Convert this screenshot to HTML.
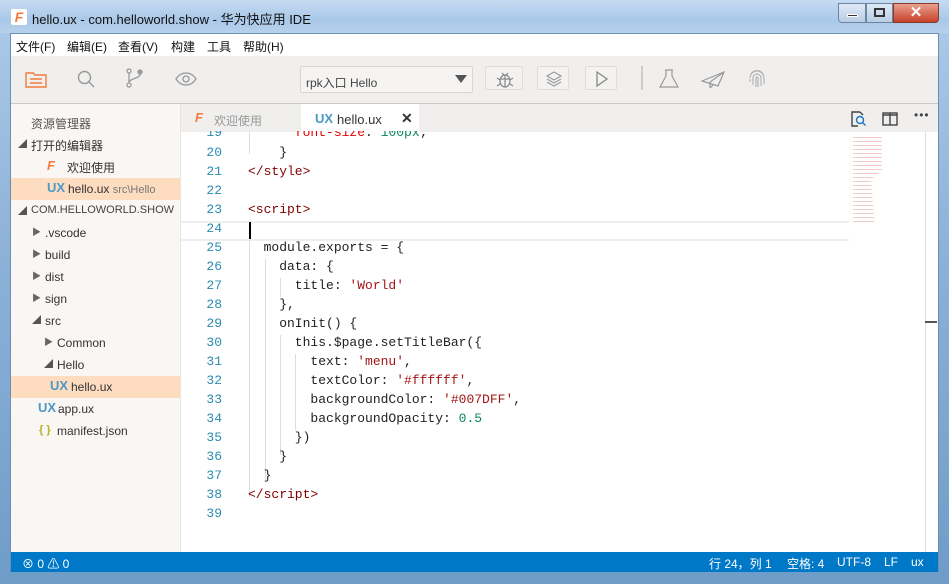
<!DOCTYPE html>
<html><head><meta charset="utf-8"><style>
*{margin:0;padding:0;box-sizing:border-box}
body{width:949px;height:584px;overflow:hidden;font-family:"Liberation Sans","Noto Sans CJK SC",sans-serif;background:linear-gradient(180deg,#aecbe8,#8fb3d9 40%,#6f9cc8);position:relative}
.abs{position:absolute}
.title{left:0;top:0;width:949px;height:33px;background:linear-gradient(180deg,#c6dcf2,#a9c8e8 60%,#b7d1ec);}
.win{left:10px;top:33px;width:929px;height:539px;background:#f0efee;border:1px solid #6b8fb5}
.menu{left:0;top:0;width:927px;height:22px;background:#fff;font-size:12px;color:#111}
.menu span{position:absolute;top:4px}
.tb{left:0;top:22px;width:927px;height:48px;background:#f0efee;border-bottom:1px solid #c9c9c9}
.side{left:0;top:70px;width:170px;height:448px;background:#faf6f3;border-right:1px solid #e8e4e0;font-size:12px;color:#333}
.side div{position:absolute;white-space:nowrap}
.sel{background:#fddcc0;width:169px;height:22px;left:0}
.ux{color:#4b9ac6;font-weight:bold;font-size:13px}
.tabs{left:170px;top:70px;width:757px;height:28px;background:#f0efee}
.ed{left:170px;top:98px;width:757px;height:420px;background:#fff;overflow:hidden}
.ln{position:absolute;left:0;width:42px;text-align:right;font-family:"Liberation Mono",monospace;font-size:13px;color:#2b8cb0}
.cd{position:absolute;left:68px;font-family:"Liberation Mono",monospace;font-size:13px;color:#222;white-space:pre}
.t{color:#800000}.s{color:#a31515}.n{color:#098658}.r{color:#e50000}
.status{left:0;top:518px;width:927px;height:20px;background:#0078c8;color:#fff;font-size:12px}
.status span{position:absolute;top:3px}
.btn{position:absolute;top:10px;height:24px;border:1px solid #ddd;border-radius:2px;background:#f3f2f1}
</style></head><body>
<div class="abs title">
 <div class="abs" style="left:11px;top:9px;width:16px;height:16px;background:#fff;border-radius:2px;color:#f47b3b;font-weight:bold;font-size:14px;line-height:16px;text-align:center;font-style:italic">F</div>
 <div class="abs" style="left:32px;top:9px;font-size:13px;color:#111">hello.ux - com.helloworld.show - 华为快应用 IDE</div>
 <div class="abs" style="left:838px;top:3px;width:28px;height:20px;border:1px solid #6b85a3;border-radius:0 0 0 4px;background:linear-gradient(#dfeaf6,#b9cde4)"><div class="abs" style="left:8px;top:10px;width:11px;height:3px;background:#333;border:1px solid #fff"></div></div>
 <div class="abs" style="left:866px;top:3px;width:27px;height:20px;border:1px solid #6b85a3;background:linear-gradient(#dfeaf6,#b9cde4)"><div class="abs" style="left:7px;top:4px;width:11px;height:9px;border:2px solid #333"></div></div>
 <div class="abs" style="left:893px;top:3px;width:46px;height:20px;border:1px solid #8a3a2a;border-radius:0 0 4px 0;background:linear-gradient(#e8a08e,#c8412a);color:#fff;font-weight:bold;font-size:15px;text-align:center;line-height:18px">✕</div>
</div>
<div class="abs win">
 <div class="abs menu"><span style="left:5px">文件(F)</span><span style="left:56px">编辑(E)</span><span style="left:107px">查看(V)</span><span style="left:160px">构建</span><span style="left:196px">工具</span><span style="left:232px">帮助(H)</span></div>
 <div class="abs tb">
  <svg class="abs" style="left:14px;top:14px" width="22" height="18" viewBox="0 0 22 18" fill="none" stroke="#f47b3b" stroke-width="1.4"><path d="M1 3h7l2 2h11v12H1z"/><path d="M5 9h12M5 13h12"/></svg>
  <svg class="abs" style="left:66px;top:14px" width="18" height="18" fill="none" stroke="#999" stroke-width="1.4"><circle cx="7.5" cy="7.5" r="6"/><path d="M12 12l5 5"/></svg>
  <svg class="abs" style="left:115px;top:12px" width="18" height="20" fill="none" stroke="#999" stroke-width="1.3"><circle cx="3" cy="17" r="2"/><circle cx="3" cy="3" r="2"/><circle cx="14" cy="4" r="2" fill="#999"/><path d="M3 5v10M14 6c0 5-11 4-11 9"/></svg>
  <svg class="abs" style="left:164px;top:16px" width="22" height="14" fill="none" stroke="#999" stroke-width="1.3"><path d="M1 7c5-8 15-8 20 0c-5 8-15 8-20 0z"/><circle cx="11" cy="7" r="3"/></svg>
  <div class="abs" style="left:289px;top:10px;width:173px;height:27px;border:1px solid #d6d6d6;border-radius:2px;background:#f5f4f3;font-size:12px;color:#444;padding:7px 5px">rpk入口 Hello<span class="abs" style="right:5px;top:8px;width:0;height:0;border-left:6px solid transparent;border-right:6px solid transparent;border-top:8px solid #555"></span></div>
  <div class="btn" style="left:474px;width:38px"><svg class="abs" style="left:10px;top:3px" width="18" height="18" fill="none" stroke="#888" stroke-width="1.2"><ellipse cx="9" cy="11" rx="5" ry="6"/><path d="M4 9h10M9 5v12M6 3l2 2M12 3l-2 2M1 8l3 2M17 8l-3 2M1 16l3-2M17 16l-3-2"/></svg></div>
  <div class="btn" style="left:526px;width:32px"><svg class="abs" style="left:7px;top:4px" width="18" height="16" fill="none" stroke="#999" stroke-width="1.1"><path d="M9 1l7 4-7 4-7-4z M2 8l7 4 7-4 M2 11l7 4 7-4"/></svg></div>
  <div class="btn" style="left:574px;width:32px"><svg class="abs" style="left:9px;top:4px" width="14" height="16" fill="none" stroke="#888" stroke-width="1.3"><path d="M2 1l10 7-10 7z"/></svg></div>
  <div class="abs" style="left:630px;top:10px;width:2px;height:24px;background:#ccc"></div>
  <svg class="abs" style="left:648px;top:13px" width="20" height="20" fill="none" stroke="#999" stroke-width="1.2"><path d="M6 1h8M7 1v6L1 18h18L13 7V1"/></svg>
  <svg class="abs" style="left:690px;top:14px" width="24" height="18" fill="none" stroke="#999" stroke-width="1.2"><path d="M1 11L23 2 17 16zM23 2L9 12l0 6 3-3"/></svg>
  <svg class="abs" style="left:737px;top:12px" width="18" height="20" fill="none" stroke="#aaa" stroke-width="1"><path d="M3 6a7 7 0 0 1 12 0M2 10a7 7 0 0 1 14 0v6M5 17v-7a4 4 0 0 1 8 0v8M8 19v-9a1 1 0 0 1 2 0v9M2 14v-3"/></svg>
 </div>
 <div class="abs side">
  <div style="left:20px;top:11px;color:#555">资源管理器</div>
  <div style="left:7px;top:33px;font-size:9px;color:#555">◢</div><div style="left:20px;top:33px">打开的编辑器</div>
  <div style="left:36px;top:54px;color:#f47b3b;font-weight:bold;font-style:italic;font-size:13px">F</div><div style="left:56px;top:55px">欢迎使用</div>
  <div class="sel" style="top:74px"></div>
  <div class="ux" style="left:36px;top:76px">UX</div><div style="left:57px;top:78px">hello.ux <span style="color:#777;font-size:11px">src\Hello</span></div>
  <div style="left:7px;top:100px;font-size:9px;color:#555">◢</div><div style="left:20px;top:100px;font-size:11px;color:#444">COM.HELLOWORLD.SHOW</div>
  <div style="left:21px;top:121px;font-size:9px;color:#666">▶</div><div style="left:34px;top:122px">.vscode</div>
  <div style="left:21px;top:143px;font-size:9px;color:#666">▶</div><div style="left:34px;top:144px">build</div>
  <div style="left:21px;top:165px;font-size:9px;color:#666">▶</div><div style="left:34px;top:166px">dist</div>
  <div style="left:21px;top:187px;font-size:9px;color:#666">▶</div><div style="left:34px;top:188px">sign</div>
  <div style="left:21px;top:209px;font-size:9px;color:#555">◢</div><div style="left:34px;top:210px">src</div>
  <div style="left:33px;top:231px;font-size:9px;color:#666">▶</div><div style="left:46px;top:232px">Common</div>
  <div style="left:33px;top:253px;font-size:9px;color:#555">◢</div><div style="left:46px;top:254px">Hello</div>
  <div class="sel" style="top:272px"></div>
  <div class="ux" style="left:39px;top:274px">UX</div><div style="left:60px;top:276px">hello.ux</div>
  <div class="ux" style="left:27px;top:296px">UX</div><div style="left:47px;top:298px">app.ux</div>
  <div style="left:28px;top:320px;color:#b8b020;font-size:11px;font-weight:bold">{ }</div><div style="left:46px;top:320px">manifest.json</div>
 </div>
 <div class="abs tabs">
  <div class="abs" style="left:14px;top:6px;color:#f47b3b;font-weight:bold;font-style:italic;font-size:13px">F</div>
  <div class="abs" style="left:33px;top:8px;font-size:12px;color:#999">欢迎使用</div>
  <div class="abs" style="left:120px;top:0;width:118px;height:28px;background:#fff"><span class="ux abs" style="left:14px;top:7px">UX</span><span class="abs" style="left:36px;top:8px;font-size:13px;color:#333">hello.ux</span><span class="abs" style="left:100px;top:6px;font-size:14px;font-weight:bold;color:#333">✕</span></div>
  <svg class="abs" style="left:670px;top:7px" width="16" height="16" fill="none" stroke-width="1.4"><path d="M9 1H1v14h6" stroke="#444"/><path d="M9 1l3 3" stroke="#444"/><circle cx="9" cy="9" r="3.5" stroke="#1a73c8"/><path d="M11.5 11.5l3 3" stroke="#1a73c8"/></svg>
  <svg class="abs" style="left:701px;top:8px" width="16" height="14" fill="none" stroke="#444" stroke-width="1.4"><rect x="1" y="1" width="14" height="12"/><path d="M8 1v12M1 3h14"/></svg>
  <div class="abs" style="left:733px;top:4px;font-size:12px;color:#444;letter-spacing:1px">•••</div>
 </div>
 <div class="abs ed">
  <div class="abs" style="left:0;top:89px;width:668px;height:20px;border-top:2px solid #eee;border-bottom:2px solid #eee"></div>
  <div class="abs" style="left:68px;top:90px;width:2px;height:17px;background:#000"></div>
  <div class="abs" style="left:68px;top:0;width:1px;height:22px;background:#ddd"></div>
  <div class="abs" style="left:68px;top:108px;width:1px;height:257px;background:#ddd"></div>
  <div class="abs" style="left:84px;top:127px;width:1px;height:221px;background:#ddd"></div>
  <div class="abs" style="left:99px;top:146px;width:1px;height:19px;background:#ddd"></div>
  <div class="abs" style="left:99px;top:203px;width:1px;height:120px;background:#ddd"></div>
  <div class="abs" style="left:114px;top:222px;width:1px;height:76px;background:#ddd"></div>
  <div class="abs" style="left:744px;top:0;width:1px;height:420px;background:#ddd"></div>
  <div class="abs" style="left:744px;top:189px;width:12px;height:2px;background:#555"></div>
  <div class="abs" style="left:672px;top:5px;width:36px;height:85px;opacity:.35;background:repeating-linear-gradient(180deg,#d66 0 1px,transparent 1px 4px);clip-path:polygon(0 0,80% 0,80% 40%,50% 50%,60% 100%,0 100%)"></div>
 </div>
 <div class="abs status"><span style="left:11px">⊗ 0 ⚠ 0</span><span style="left:698px">行 24，列 1</span><span style="left:776px">空格: 4</span><span style="left:826px">UTF-8</span><span style="left:873px">LF</span><span style="left:900px">ux</span></div>
</div>
<div class="abs" style="left:180px;top:131px;width:757px;height:420px;overflow:hidden;pointer-events:none">
<div class="ln" style="top:-6px">19</div><div class="cd" style="top:-6px">      <span class="r">font-size</span>: <span class="n">100px</span>;</div>
<div class="ln" style="top:14px">20</div><div class="cd" style="top:14px">    }</div>
<div class="ln" style="top:33px">21</div><div class="cd" style="top:33px"><span class="t">&lt;/style&gt;</span></div>
<div class="ln" style="top:52px">22</div>
<div class="ln" style="top:71px">23</div><div class="cd" style="top:71px"><span class="t">&lt;script&gt;</span></div>
<div class="ln" style="top:90px">24</div>
<div class="ln" style="top:109px">25</div><div class="cd" style="top:109px">  module.exports = {</div>
<div class="ln" style="top:128px">26</div><div class="cd" style="top:128px">    data: {</div>
<div class="ln" style="top:147px">27</div><div class="cd" style="top:147px">      title: <span class="s">'World'</span></div>
<div class="ln" style="top:166px">28</div><div class="cd" style="top:166px">    },</div>
<div class="ln" style="top:185px">29</div><div class="cd" style="top:185px">    onInit() {</div>
<div class="ln" style="top:204px">30</div><div class="cd" style="top:204px">      this.$page.setTitleBar({</div>
<div class="ln" style="top:223px">31</div><div class="cd" style="top:223px">        text: <span class="s">'menu'</span>,</div>
<div class="ln" style="top:242px">32</div><div class="cd" style="top:242px">        textColor: <span class="s">'#ffffff'</span>,</div>
<div class="ln" style="top:261px">33</div><div class="cd" style="top:261px">        backgroundColor: <span class="s">'#007DFF'</span>,</div>
<div class="ln" style="top:280px">34</div><div class="cd" style="top:280px">        backgroundOpacity: <span class="n">0.5</span></div>
<div class="ln" style="top:299px">35</div><div class="cd" style="top:299px">      })</div>
<div class="ln" style="top:318px">36</div><div class="cd" style="top:318px">    }</div>
<div class="ln" style="top:337px">37</div><div class="cd" style="top:337px">  }</div>
<div class="ln" style="top:356px">38</div><div class="cd" style="top:356px"><span class="t">&lt;/script&gt;</span></div>
<div class="ln" style="top:375px">39</div>
</div>
</body></html>
